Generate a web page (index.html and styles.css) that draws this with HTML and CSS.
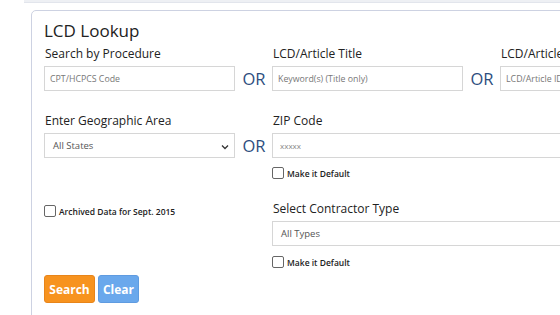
FILE: index.html
```html
<!DOCTYPE html>
<html>
<head>
<meta charset="utf-8">
<link rel="stylesheet" href="styles.css">
</head>
<body>
<div class="topband"></div>
<div class="card">
  <h1 class="title">LCD Lookup</h1>
  <div class="grid">
    <label class="lbl c1">Search by Procedure</label>
    <label class="lbl c3">LCD/Article Title</label>
    <label class="lbl c5">LCD/Article ID</label>

    <div class="field c1"><span class="ph">CPT/HCPCS Code</span></div>
    <div class="or c2">OR</div>
    <div class="field c3"><span class="ph">Keyword(s) (Title only)</span></div>
    <div class="or c4">OR</div>
    <div class="field c5"><span class="ph">LCD/Article ID</span></div>

    <label class="lbl c1 r2">Enter Geographic Area</label>
    <label class="lbl c3 r2">ZIP Code</label>

    <div class="field select c1"><span class="val">All States</span>
      <svg class="chev" width="8" height="6" viewBox="0 0 8 6"><path d="M1 1.5 L4 4.5 L7 1.5" fill="none" stroke="#333" stroke-width="1.3"/></svg>
    </div>
    <div class="or c2">OR</div>
    <div class="field c35"><span class="ph zip">xxxxx</span></div>

    <div class="check c35"><span class="box"></span><span>Make it Default</span></div>

    <div class="check arch c1"><span class="box"></span><span>Archived Data for Sept. 2015</span></div>
    <label class="lbl c35 r3">Select Contractor Type</label>

    <div class="field c35 types"><span class="val">All Types</span></div>
    <div class="check c35 last"><span class="box"></span><span>Make it Default</span></div>
  </div>
  <div class="buttons">
    <button class="btn search">Search</button>
    <button class="btn clear">Clear</button>
  </div>
</div>
</body>
</html>
```
FILE: styles.css
```css
html, body {
  margin: 0;
  padding: 0;
  overflow: hidden;
  background: #fff;
  font-family: "Open Sans", "Liberation Sans", sans-serif;
  color: #222;
}
.topband {
  height: 2px;
  background: #eef0f4;
  border-bottom: 1px solid #e2e5ec;
  margin-left: 24px;
}
.card {
  margin: 7px 0 0 31px;
  width: 760px;
  height: 400px;
  border: 1px solid #cdd2e2;
  border-radius: 5px;
  padding: 9px 0 0 12px;
  box-sizing: border-box;
}
.title {
  margin: 0;
  font-size: 17px;
  font-weight: 400;
  line-height: 22px;
}
.grid {
  display: grid;
  grid-template-columns: 191px 37px 191px 37px 191px;
  align-items: center;
  margin-top: 3px;
}
.c1 { grid-column: 1; }
.c2 { grid-column: 2; }
.c3 { grid-column: 3; }
.c4 { grid-column: 4; }
.c5 { grid-column: 5; }
.c35 { grid-column: 3 / 6; }
.lbl {
  font-size: 12px;
  line-height: 17px;
  padding-left: 1px;
  margin-bottom: 4px;
  align-self: end;
}
.r2 { margin-top: 21px; }
.r3 { margin-top: 21px; }
.field {
  height: 25px;
  border: 1px solid #d6d6d6;
  box-sizing: border-box;
  display: flex;
  align-items: center;
  padding-left: 5px;
  background: #fff;
}
.ph {
  font-size: 8.8px;
  color: #777;
}
.zip { font-size: 8px; padding-left: 2px; color: #888; }
.val {
  font-size: 9.5px;
  color: #555;
  padding-left: 3px;
}
.types .val { padding-left: 3px; }
.select { position: relative; }
.chev { position: absolute; right: 5px; top: 10px; }
.or {
  font-size: 16.5px;
  color: #2d4e7e;
  text-align: center;
  line-height: 20px;
  padding-left: 1px;
}
.check {
  display: flex;
  align-items: center;
  font-size: 8.5px;
  font-weight: 600;
  color: #222;
  margin-top: 9px;
  height: 12px;
}
.last { margin-top: 10px; }
.box {
  width: 10px;
  height: 10px;
  border: 1px solid #666;
  border-radius: 2px;
  margin-right: 3px;
  flex: none;
}
.arch { margin-top: 0; align-self: end; margin-bottom: 4px; }
.types { margin-top: 0; }
.buttons {
  display: flex;
  gap: 3px;
  margin-top: 7px;
}
.btn {
  font-family: "Open Sans", "Liberation Sans", sans-serif;
  font-size: 12px;
  font-weight: 700;
  color: #fff;
  height: 28px;
  border-radius: 3px;
  padding: 0;
  cursor: pointer;
}
.search {
  width: 51px;
  background: #f7931f;
  border: 1px solid #e8851a;
}
.clear {
  width: 41px;
  background: #6aa8ec;
  border: 1px solid #5f9be0;
}
```
